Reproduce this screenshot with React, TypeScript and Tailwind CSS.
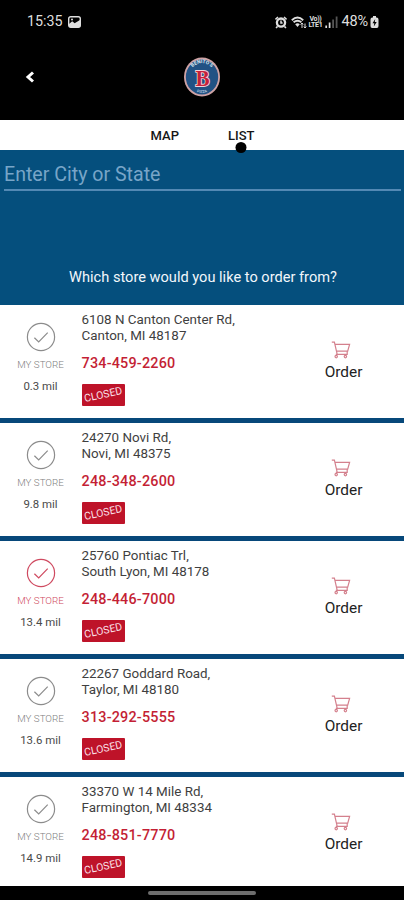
import React, { useState } from "react";

type Store = {
  id: number;
  street: string;
  city: string;
  phone: string;
  distance: string;
};

const STORES: Store[] = [
  { id: 1, street: "6108 N Canton Center Rd,", city: "Canton, MI 48187", phone: "734-459-2260", distance: "0.3 mil" },
  { id: 2, street: "24270 Novi Rd,", city: "Novi, MI 48375", phone: "248-348-2600", distance: "9.8 mil" },
  { id: 3, street: "25760 Pontiac Trl,", city: "South Lyon, MI 48178", phone: "248-446-7000", distance: "13.4 mil" },
  { id: 4, street: "22267 Goddard Road,", city: "Taylor, MI 48180", phone: "313-292-5555", distance: "13.6 mil" },
  { id: 5, street: "33370 W 14 Mile Rd,", city: "Farmington, MI 48334", phone: "248-851-7770", distance: "14.9 mil" },
];

const StatusBar = () => (
  <div className="flex h-[42px] items-center pl-[27px] pr-[25px] pt-[2px] text-[14.3px] text-[#dedede]">
    <span>15:35</span>
    <svg className="ml-[5px]" width="13" height="12" viewBox="0 0 13 12">
      <rect x="0.7" y="0.7" width="11.6" height="10.6" rx="2" fill="none" stroke="#dedede" strokeWidth="1.4" />
      <path d="M1 11V8l3.2-2.8 2.4 2L12 4v7z" fill="#dedede" />
      <circle cx="4" cy="3.4" r="1" fill="#dedede" />
    </svg>
    <svg className="ml-auto" width="12" height="13" viewBox="0 0 12 13">
      <circle cx="6" cy="6.6" r="4.1" fill="none" stroke="#dedede" strokeWidth="2.3" />
      <path d="M0.5 3.4 3 1M11.5 3.4 9 1M2.6 10.4 1 12M9.4 10.4 11 12M6 4.6v2.3h1.6" fill="none" stroke="#dedede" strokeWidth="1.5" />
    </svg>
    <svg className="ml-[4px]" width="16" height="13" viewBox="0 0 16 13">
      <path d="M0.8 4.2Q6.5-1 12.2 4.2M2.6 6.3Q6.5 3 10.4 6.3" fill="none" stroke="#dedede" strokeWidth="1.9" />
      <path d="M4.2 8.2Q6.5 6.4 8.8 8.2L6.5 11z" fill="#dedede" />
      <path d="M11 7v5M9.6 8.6 11 7l1.2 1.5M14 12V7.5M12.8 10.6 14 12l1.3-1.5" fill="none" stroke="#dedede" strokeWidth="1" />
    </svg>
    <div className="ml-px w-[17px] text-[7px] font-bold leading-[6.5px] tracking-[-0.3px]">
      <div className="pl-[1px]">Vo))</div>
      <div>LTE1</div>
    </div>
    <svg width="13" height="12" viewBox="0 0 13 12">
      <path d="M1.2 12V9.5M4.6 12V6.5" stroke="#dedede" strokeWidth="1.7" />
      <path d="M8.1 12V3.5M11.6 12V0.5" stroke="#555" strokeWidth="1.8" />
    </svg>
    <span className="ml-[3px] text-[14.5px] tracking-[-0.1px]">48%</span>
    <svg className="ml-[2px]" width="9" height="12" viewBox="0 0 9 12">
      <path d="M3 0h3v1.6h.6Q8.5 1.6 8.5 3.5v6.6Q8.5 12 6.8 12H2.2Q.5 12 .5 10.1V3.5Q.5 1.6 2.4 1.6H3z" fill="#dedede" />
      <path d="M5.2 3 2.5 7.2h1.8L3.8 10.4 6.7 6H4.8z" fill="#000" />
    </svg>
  </div>
);

const Logo = () => (
  <svg width="38" height="40" viewBox="0 0 38 40">
    <defs>
      <path id="logo-top" d="M6.6 18a12.4 11.9 0 0 1 24.8 0" />
      <path id="logo-bottom" d="M3.4 20.3a15.6 15.6 0 0 0 31.2 0" />
    </defs>
    <ellipse cx="19" cy="20" rx="18" ry="19.4" fill="#cfa3a5" />
    <ellipse cx="19" cy="20" rx="16.2" ry="17.5" fill="#215284" />
    <text fontSize="5" fontWeight="700" fill="#dce6f0" textAnchor="middle">
      <textPath href="#logo-top" startOffset="50%">BENITO'S</textPath>
    </text>
    <text fontSize="3.8" fontWeight="700" fill="#a9c0d8" textAnchor="middle">
      <textPath href="#logo-bottom" startOffset="50%">PIZZA</textPath>
    </text>
    <text
      transform="translate(19.6 28.8) scale(0.92 1)"
      fontSize="23"
      fontWeight="700"
      textAnchor="middle"
      fill="#c5203a"
      stroke="#f0d5dc"
      strokeWidth="1.8"
      paintOrder="stroke"
      className="font-['Liberation_Serif',serif]"
    >
      B
    </text>
  </svg>
);

const CheckCircle = () => (
  <svg width="30" height="30" viewBox="0 0 30 30" fill="none" stroke="currentColor">
    <circle cx="15" cy="15" r="13.6" strokeWidth="1.2" />
    <path d="M8.4 15.8 12.7 20 21.7 10.7" strokeWidth="1.2" />
  </svg>
);

const CartIcon = () => (
  <svg width="20" height="18" viewBox="0 0 20 18" fill="none" stroke="#d4808d" strokeWidth="1.2">
    <path d="M0.8 1.2H3.4L6.2 13.3M3.9 3.4H18.6L16.7 10.2H5.6M4.8 13.3H16.2V10.4" />
    <circle cx="5.2" cy="15.6" r="1.2" />
    <circle cx="14.4" cy="15.6" r="1.2" />
  </svg>
);

type StoreCardProps = {
  store: Store;
  selected: boolean;
  onSelect: (id: number) => void;
};

const StoreCard = ({ store, selected, onSelect }: StoreCardProps) => (
  <div className="flex h-[113.6px] shrink-0 bg-white">
    <button
      type="button"
      onClick={() => onSelect(store.id)}
      className={`flex w-[81px] flex-col items-center pt-[17px] ${selected ? "text-[#cf4a60]" : "text-[#8c8c8c]"}`}
    >
      <CheckCircle />
      <span
        className={`mt-[6px] text-[9.8px] font-light leading-[14px] whitespace-nowrap ${selected ? "text-[#cf4a60]" : "text-[#808080]"}`}
      >
        MY STORE
      </span>
      <span className="mt-[6px] text-[11.4px] leading-[16px] text-[#4a4a4a] whitespace-nowrap">{store.distance}</span>
    </button>
    <div className="flex w-[207px] flex-col items-start pl-[0.5px] pt-[7.5px] text-[13.4px] leading-[16px] text-[#3f3f3f]">
      <div>{store.street}</div>
      <div>{store.city}</div>
      <a className="mt-[9.5px] text-[14.4px] font-medium leading-[20px] tracking-[0.2px] text-[#c41f35]">{store.phone}</a>
      <div className="mt-[10px] flex h-[22px] w-[43px] items-center justify-center rounded-[1px] bg-[#be1329]">
        <span className="-rotate-[12deg] pt-px text-[10.5px] leading-none text-[#f9dfe3]">CLOSED</span>
      </div>
    </div>
    <button type="button" className="flex w-[111px] flex-col items-center pt-[36px] text-[15.4px] text-[#222]">
      <span className="-ml-[5px]">
        <CartIcon />
      </span>
      <span className="mt-[3px] leading-[20px]">Order</span>
    </button>
  </div>
);

const App = () => {
  const [myStore, setMyStore] = useState(3);
  const [search, setSearch] = useState("");

  return (
    <div className="flex h-[900px] w-[404px] flex-col overflow-hidden bg-black font-[Roboto,sans-serif]">
      <header className="h-[119.5px] shrink-0">
        <StatusBar />
        <div className="grid h-[70px] grid-cols-3 items-center">
          <svg className="ml-[25px]" width="11" height="12" viewBox="0 0 11 12">
            <path d="M8 1.5 3 6l5 4.5" fill="none" stroke="#fff" strokeWidth="3" />
          </svg>
          <div className="flex justify-center">
            <Logo />
          </div>
        </div>
      </header>

      <nav className="flex h-[30px] shrink-0 justify-center gap-[49px] bg-white pl-px text-[13px] font-medium leading-[31px] text-[#161616]">
        <span>MAP</span>
        <span className="relative">
          LIST
          <span className="absolute left-1/2 top-[22.5px] size-[11px] -translate-x-1/2 rounded-full bg-black" />
        </span>
      </nav>

      <section className="flex h-[155px] shrink-0 flex-col bg-[#054f7d] px-[4px]">
        <input
          value={search}
          onChange={(e) => setSearch(e.target.value)}
          placeholder="Enter City or State"
          className="mt-[9px] h-[32px] w-[397px] border-b-2 border-[#5389b4] pt-[2px] text-[19.6px] text-white outline-none placeholder:text-[#78a5c8]"
        />
        <p className="mt-auto mb-[17.5px] pl-[2px] text-center text-[14.6px] leading-[20px] text-[#f2f7fb]">
          Which store would you like to order from?
        </p>
      </section>

      <main className="flex min-h-0 flex-1 flex-col gap-[4.5px] overflow-hidden bg-[#07487a]">
        {STORES.map((store) => (
          <StoreCard key={store.id} store={store} selected={store.id === myStore} onSelect={setMyStore} />
        ))}
      </main>

      <footer className="flex h-[14px] shrink-0 justify-center bg-black pt-[5px]">
        <div className="h-[4px] w-[108px] rounded-full bg-[#6e6e6e]" />
      </footer>
    </div>
  );
};

export default App;
